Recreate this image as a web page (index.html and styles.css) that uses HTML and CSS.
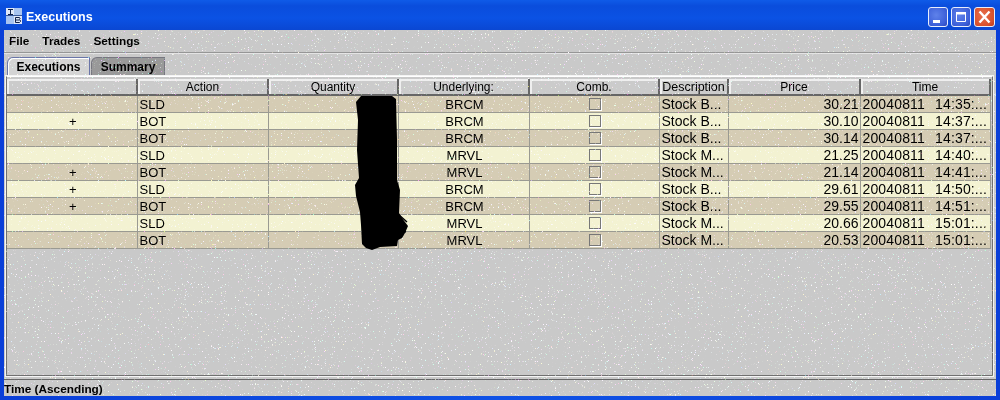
FILE: index.html
```html
<!DOCTYPE html>
<html lang="en">
<head>
    <meta charset="UTF-8">
    <title>Executions</title>
    <link rel="stylesheet" href="styles.css">
</head>
<body>
    <div class="window">
        <div class="titlebar">
            <svg class="app-icon" width="16" height="16" viewBox="0 0 16 16">
                <rect width="16" height="16" fill="#dfe8f8"/>
                <rect x="8" y="0" width="8" height="7" fill="#a8c4f0"/>
                <rect x="0" y="8" width="8" height="8" fill="#a8c4f0"/>
                <path d="M0 7.500h16" stroke="#3a5a9a"/>
                <path d="M2 1.500h5M4.500 1.500v5M2 6.500h5" stroke="#10204a" fill="none"/>
                <path d="M9.500 9.500v5h4l1-1v-1l-1-.5h-4M9.500 9.500h4l.5.500v1l-.5 .500" stroke="#10204a" fill="none"/>
            </svg>
            <span class="title">Executions</span>
            <div class="win-buttons">
                <div class="win-btn">
                    <svg width="18" height="18" viewBox="0 0 18 18"><rect x="4" y="12" width="7" height="3" fill="#fff"/></svg>
                </div>
                <div class="win-btn">
                    <svg width="18" height="18" viewBox="0 0 18 18"><path d="M4.500 4.500h9v9h-9z" fill="none" stroke="#fff"/><rect x="4" y="4" width="10" height="2.500" fill="#fff"/></svg>
                </div>
                <div class="win-btn close">
                    <svg width="19" height="18" viewBox="0 0 19 18"><path d="M4.500 3.500l10 11M14.500 3.500l-10 11" stroke="#fff" stroke-width="2.400"/></svg>
                </div>
            </div>
        </div>

        <div class="content">
            <div class="menubar">
                <span>File</span>
                <span>Trades</span>
                <span>Settings</span>
            </div>

            <div class="tabs">
                <div class="tab active">Executions</div>
                <div class="tab">Summary</div>
            </div>

            <div class="panel-wrap">
                <div class="panel">
                    <table class="grid">
                        <thead>
                            <tr>
                                <th class="c-flag"></th>
                                <th class="c-131">Action</th>
                                <th class="c-130">Quantity</th>
                                <th class="c-131">Underlying:</th>
                                <th class="c-130">Comb.</th>
                                <th class="c-desc">Description</th>
                                <th class="c-price">Price</th>
                                <th class="c-130">Time</th>
                            </tr>
                        </thead>
                        <tbody>
                            <tr class="dark"><td class="mid"></td><td>SLD</td><td></td><td class="mid">BRCM</td><td class="mid"><i class="check"></i></td><td class="wide">Stock B...</td><td class="num">30.21</td><td class="stamp">20040811 &nbsp;14:35:...</td></tr>
                            <tr><td class="mid">+</td><td>BOT</td><td></td><td class="mid">BRCM</td><td class="mid"><i class="check"></i></td><td class="wide">Stock B...</td><td class="num">30.10</td><td class="stamp">20040811 &nbsp;14:37:...</td></tr>
                            <tr class="dark"><td class="mid"></td><td>BOT</td><td></td><td class="mid">BRCM</td><td class="mid"><i class="check"></i></td><td class="wide">Stock B...</td><td class="num">30.14</td><td class="stamp">20040811 &nbsp;14:37:...</td></tr>
                            <tr><td class="mid"></td><td>SLD</td><td></td><td class="mid">MRVL</td><td class="mid"><i class="check"></i></td><td class="wide">Stock M...</td><td class="num">21.25</td><td class="stamp">20040811 &nbsp;14:40:...</td></tr>
                            <tr class="dark"><td class="mid">+</td><td>BOT</td><td></td><td class="mid">MRVL</td><td class="mid"><i class="check"></i></td><td class="wide">Stock M...</td><td class="num">21.14</td><td class="stamp">20040811 &nbsp;14:41:...</td></tr>
                            <tr><td class="mid">+</td><td>SLD</td><td></td><td class="mid">BRCM</td><td class="mid"><i class="check"></i></td><td class="wide">Stock B...</td><td class="num">29.61</td><td class="stamp">20040811 &nbsp;14:50:...</td></tr>
                            <tr class="dark"><td class="mid">+</td><td>BOT</td><td></td><td class="mid">BRCM</td><td class="mid"><i class="check"></i></td><td class="wide">Stock B...</td><td class="num">29.55</td><td class="stamp">20040811 &nbsp;14:51:...</td></tr>
                            <tr><td class="mid"></td><td>SLD</td><td></td><td class="mid">MRVL</td><td class="mid"><i class="check"></i></td><td class="wide">Stock M...</td><td class="num">20.66</td><td class="stamp">20040811 &nbsp;15:01:...</td></tr>
                            <tr class="dark"><td class="mid"></td><td>BOT</td><td></td><td class="mid">MRVL</td><td class="mid"><i class="check"></i></td><td class="wide">Stock M...</td><td class="num">20.53</td><td class="stamp">20040811 &nbsp;15:01:...</td></tr>
                        </tbody>
                    </table>
                </div>
            </div>

            <div class="statusbar">Time (Ascending)</div>

            <!-- speckle from the screenshot's colour dithering -->
            <svg class="dither" width="992" height="366">
                <filter id="speckle" x="0" y="0" width="100%" height="100%">
                    <feTurbulence type="fractalNoise" baseFrequency="1.7" numOctaves="1" seed="4"/>
                    <feColorMatrix values="2 0 0 0 -0.3  0 2 0 0 -0.3  0 0 2 0 -0.3  0 0 0 14 -9.200"/>
                </filter>
                <rect width="992" height="366" filter="url(#speckle)"/>
            </svg>
        </div>

        <!-- marker scribble over the quantity column -->
        <svg class="scribble" width="60" height="160" viewBox="350 94 60 160">
            <path d="M361 96L392 96L396 99L397 140L397 180L400 190L399 213L402 218L408 226L405 233L402 238L398 240L397 246L380 247L372 250L366 248L362 244L361 225L360 212L356 196L355 185L359 178L357 150L358 120L356 102Z" fill="#000"/>
            <path d="M398 214l9 8M398 222l8 4M398 230l8 2M397 238l6-3" stroke="#000" stroke-width="1.500"/>
        </svg>
    </div>
</body>
</html>
```

FILE: styles.css
```css
* {
    box-sizing: border-box;
}
html, body {
    margin: 0;
    padding: 0;
}
body {
    font-family: "Liberation Sans", Arial, sans-serif;
    font-size: 12px;
    color: #000;
    background: #0a3fd0;
}
.window {
    position: relative;
    width: 1000px;
    height: 400px;
    display: flex;
    flex-direction: column;
    overflow: hidden;
    background: linear-gradient(90deg, #0a3fd8 0%, #0f52e6 50%, #0a3fd8 100%);
}

/* title bar */
.titlebar {
    height: 30px;
    flex: none;
    display: flex;
    align-items: center;
    padding: 0 5px 0 6px;
    background: linear-gradient(180deg, #0f5be8 0%, #0a4ddc 20%, #0b52e4 60%, #0a47d2 100%);
}
.app-icon {
    flex: none;
    margin-top: 1px;
}
.title {
    margin: 4px 0 0 4px;
    color: #fff;
    font-weight: bold;
    font-size: 12.500px;
}
.win-buttons {
    margin-left: auto;
    margin-top: 4px;
    display: flex;
    gap: 3px;
}
.win-btn {
    width: 20px;
    height: 20px;
    border: 1px solid #e8eefc;
    border-radius: 3px;
    background: radial-gradient(circle at 40% 40%, #5f82ea 0%, #3c5fd8 70%, #2a46b8 100%);
}
.win-btn svg {
    display: block;
}
.win-btn.close {
    width: 21px;
    background: radial-gradient(circle at 40% 40%, #e8704c 0%, #d8502c 70%, #b83a1c 100%);
}

/* everything inside the blue frame */
.content {
    position: relative;
    flex: 1;
    min-height: 0;
    display: flex;
    flex-direction: column;
    margin: 0 4px 4px;
    background: #c9c9c9;
}
.menubar {
    height: 23px;
    flex: none;
    display: flex;
    align-items: center;
    gap: 13px;
    padding-left: 5px;
    font-size: 11.800px;
    font-weight: bold;
    border-bottom: 1px solid #969696;
    box-shadow: 0 1px 0 #e4e4e4;
}
.tabs {
    height: 23px;
    flex: none;
    display: flex;
    align-items: flex-end;
    padding-left: 3px;
}
.tab {
    height: 19px;
    padding-top: 2px;
    margin-right: 1px;
    text-align: center;
    font-weight: bold;
    border: 1px solid #77777f;
    border-bottom: 0;
    border-top-left-radius: 6px;
    background: #999;
    width: 74px;
}
.tab.active {
    width: 83px;
    background: #d4d4d4;
    border: 1px solid #6a75a8;
    box-shadow: inset 1px 1px 0 #fff;
}

/* table area */
.panel-wrap {
    flex: 1;
    min-height: 0;
    display: flex;
    padding: 0 3px 3px 2px;
    border-bottom: 1px solid #666;
}
.panel {
    flex: 1;
    padding-top: 2px;
    border: 1px solid #707070;
    border-top: 1px solid #fff;
    outline: 1px solid #f4f4f4;
}
.grid {
    table-layout: fixed;
    border-collapse: collapse;
    width: 983px;
}
.grid th {
    height: 16px;
    padding: 0;
    font-weight: normal;
    text-align: center;
    background: #cbcbcb;
    border-right: 2px solid #666;
    border-bottom: 2px solid #666;
    box-shadow: inset 2px 2px 0 #efefef;
    overflow: hidden;
}
.c-flag { width: 130px; }
.c-130 { width: 130px; }
.c-131 { width: 131px; }
.grid th.c-desc { width: 69px; font-size: 12.500px; }
.c-price { width: 132px; }
.grid td {
    height: 17px;
    padding: 0 0 0 2px;
    font-size: 13px;
    border-right: 1px solid #9a9a92;
    border-bottom: 1px solid #9a9a92;
    background: #f3f2d2;
    white-space: nowrap;
    overflow: hidden;
}
.grid tr.dark td {
    background: #d5ccb4;
}
.grid td.mid {
    text-align: center;
}
.grid td.wide {
    font-size: 14px;
}
.grid td.num {
    text-align: right;
    padding-right: 1px;
    font-size: 14px;
}
.grid td.stamp {
    font-size: 14px;
    word-spacing: 1px;
    letter-spacing: 0.150px;
}
.check {
    display: block;
    width: 12px;
    height: 12px;
    margin: 0 auto;
    border: 1px solid #777;
    background: inherit;
    box-shadow: 1px 1px 0 #fff;
}
.statusbar {
    height: 16px;
    flex: none;
    padding-top: 2px;
    font-size: 11.800px;
    font-weight: bold;
}

/* overlays */
.scribble {
    position: absolute;
    left: 350px;
    top: 94px;
}
.dither {
    position: absolute;
    left: 0;
    top: 0;
    pointer-events: none;
    mix-blend-mode: overlay;
}
```
